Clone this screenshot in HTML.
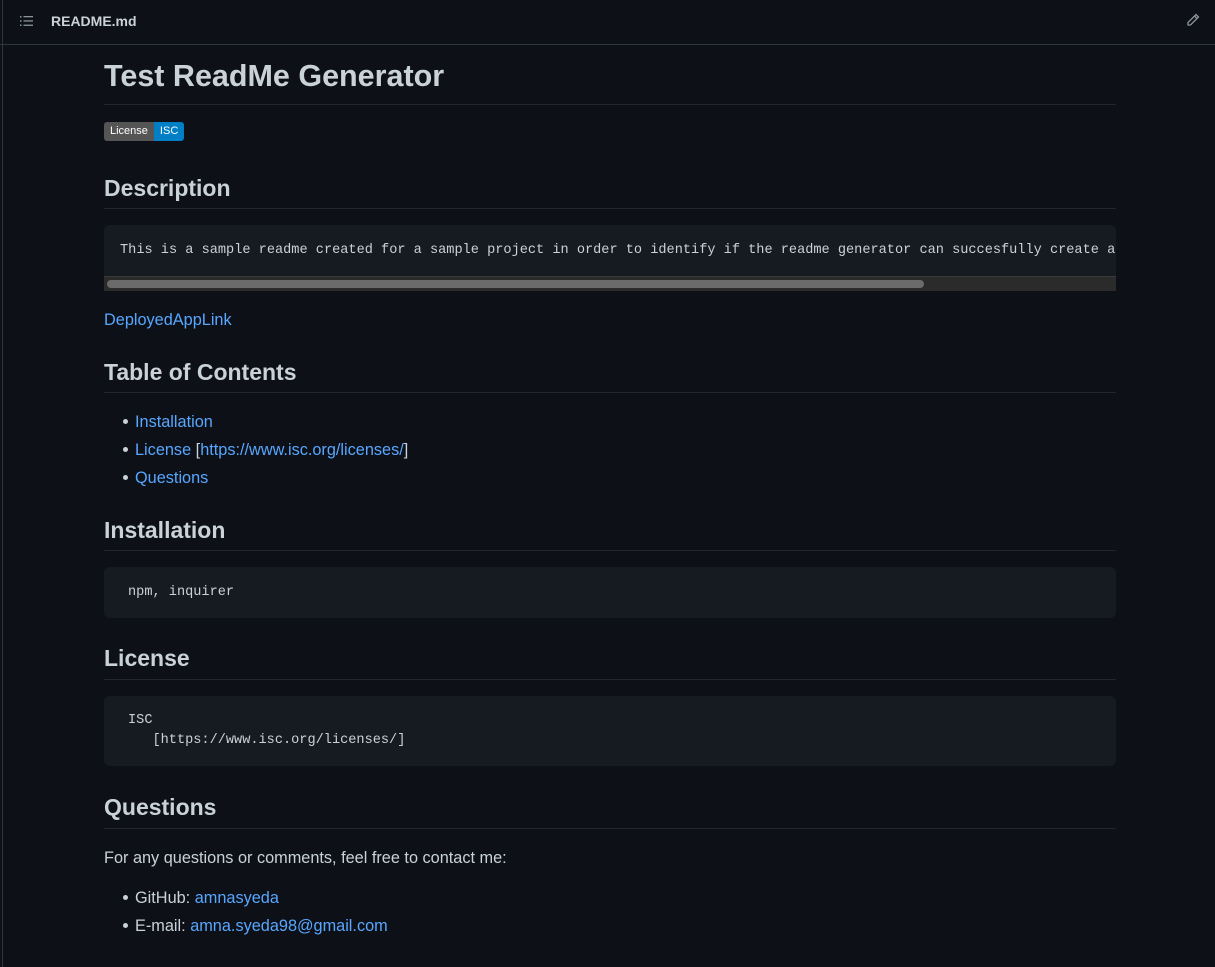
<!DOCTYPE html>
<html><head><meta charset="utf-8"><style>
*{margin:0;padding:0;box-sizing:border-box}
body{width:1215px;height:967px;background:#0d1117;font-family:"Liberation Sans",sans-serif;color:#c9d1d9;position:relative;overflow:hidden}
.frame{position:absolute;left:2px;top:0;width:1213px;height:967px;border-left:1px solid #30363d}
.hdr{position:absolute;left:0;top:0;width:1215px;height:45px;border-bottom:1px solid #30363d}
.a{position:absolute;white-space:nowrap}
.h2{font-size:23px;font-weight:bold;left:104px;line-height:30px}
.line{position:absolute;left:104px;width:1012px;height:1px;background:#21262d}
.p{font-size:16.3px;line-height:20px}
a,.l{color:#58a6ff;text-decoration:none}
.code{position:absolute;left:104px;width:1012px;background:#161b22;border-radius:6px;font-family:"Liberation Mono",monospace;font-size:13.6px;color:#c9d1d9}
.dot{position:absolute;left:123px;width:5px;height:5px;border-radius:50%;background:#c9d1d9}
</style></head><body>
<div class="frame"></div>
<div class="hdr">
<svg class="a" style="left:19px;top:13px" width="16" height="16" viewBox="0 0 16 16" fill="#8b949e"><rect x="1" y="3" width="1.5" height="1.5"/><rect x="1" y="7.25" width="1.5" height="1.5"/><rect x="1" y="11.5" width="1.5" height="1.5"/><rect x="4.5" y="3" width="9.5" height="1.3"/><rect x="4.5" y="7.3" width="9.5" height="1.3"/><rect x="4.5" y="11.6" width="9.5" height="1.3"/></svg>
<div class="a" style="left:51px;top:13px;font-size:14px;font-weight:bold;color:#c9d1d9">README.md</div>
<svg class="a" style="left:1185px;top:12px" width="16" height="16" viewBox="0 0 16 16" fill="none" stroke="#8b949e" stroke-width="1.3"><path d="M11 2.5l2.5 2.5-8 8H3v-2.5z M9.5 4l2.5 2.5"/></svg>
</div>
<div class="a" style="left:104px;top:58px;font-size:30.5px;font-weight:bold;line-height:36px">Test ReadMe Generator</div>
<div class="line" style="top:104px"></div>
<div class="a" style="left:104px;top:122px;height:19px;border-radius:3px;overflow:hidden;font-size:11px;line-height:19px;display:flex"><span style="background:#555;color:#fff;padding:0 6px">License</span><span style="background:#007ec6;color:#fff;padding:0 6px">ISC</span></div>
<div class="a h2" style="top:173px">Description</div>
<div class="line" style="top:208px"></div>
<div class="code" style="top:225px;height:66px;overflow:hidden;border-radius:6px 6px 0 0">
<div class="a" style="left:16px;top:17px;line-height:18px">This is a sample readme created for a sample project in order to identify if the readme generator can succesfully create a</div>
<div class="a" style="left:0;top:51px;width:1012px;height:15px;background:#2b2b2b;border-top:1px solid #3a3a3a"><div style="position:absolute;left:3px;top:3px;width:817px;height:8px;border-radius:4px;background:#6b6b6b"></div></div>
</div>
<div class="a p l" style="left:104px;top:310px">DeployedAppLink</div>
<div class="a h2" style="top:357px">Table of Contents</div>
<div class="line" style="top:392px"></div>
<div class="dot" style="top:419px"></div><div class="a p" style="left:135px;top:412px"><a>Installation</a></div>
<div class="dot" style="top:447px"></div><div class="a p" style="left:135px;top:440px"><a>License</a> [<a>https://www.isc.org/licenses/</a>]</div>
<div class="dot" style="top:475px"></div><div class="a p" style="left:135px;top:468px"><a>Questions</a></div>
<div class="a h2" style="top:515px">Installation</div>
<div class="line" style="top:550px"></div>
<div class="code" style="top:567px;height:51px"><div class="a" style="left:24px;top:17px;line-height:18px">npm, inquirer</div></div>
<div class="a h2" style="top:643px">License</div>
<div class="line" style="top:679px"></div>
<div class="code" style="top:696px;height:70px"><div class="a" style="left:24px;top:15px;line-height:20px">ISC<br>&nbsp;&nbsp;&nbsp;[https://www.isc.org/licenses/]</div></div>
<div class="a h2" style="top:792px">Questions</div>
<div class="line" style="top:828px"></div>
<div class="a p" style="left:104px;top:848px">For any questions or comments, feel free to contact me:</div>
<div class="dot" style="top:895px"></div><div class="a p" style="left:135px;top:888px">GitHub: <a>amnasyeda</a></div>
<div class="dot" style="top:923px"></div><div class="a p" style="left:135px;top:916px">E-mail: <a>amna.syeda98@gmail.com</a></div>
</body></html>
